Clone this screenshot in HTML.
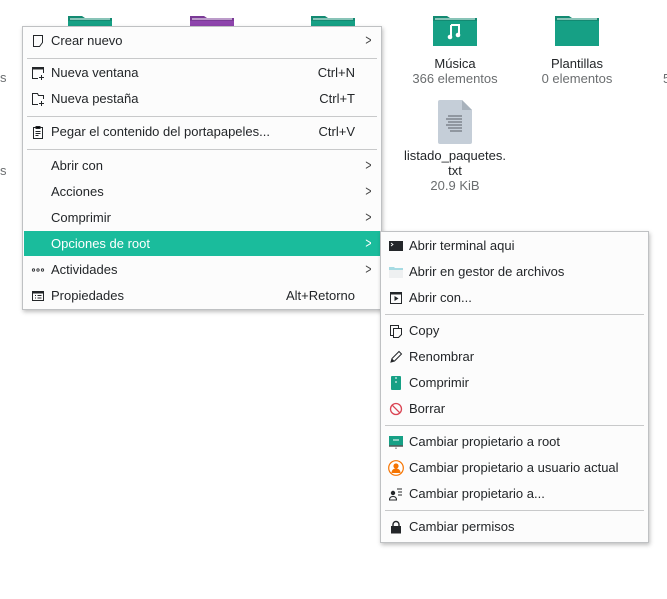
<!DOCTYPE html>
<html><head><meta charset="utf-8"><style>
*{margin:0;padding:0;box-sizing:border-box}
body{width:667px;height:599px;background:#fff;position:relative;overflow:hidden;font-family:"Liberation Sans",sans-serif;font-size:13px;color:#232629}
.a{position:absolute}
.menu{position:absolute;background:#fcfcfc;border:1px solid #bfc1c3;box-shadow:1px 2px 4px rgba(0,0,0,.25)}
.it{position:absolute;left:0;right:0;height:26px;line-height:26px}
.it .t{position:absolute;left:28px}
.it .s{position:absolute;right:26px}
.it .c{position:absolute;right:8px;font-size:15px;color:#444;transform:scaleX(.7)}
.sep{position:absolute;left:4px;right:4px;height:1px;background:#c8c9ca}
.ic{position:absolute;left:8px;top:6px;width:14px;height:14px}
.lbl{position:absolute;text-align:center;color:#232629}
.sub{color:#6b6e70}
</style></head><body>
<svg class="a" style="left:68px;top:14px" width="44" height="14"><path d="M0 2h14l3 2h27v10H0z" fill="#138a72"/><path d="M0 7h44v7H0z" fill="#16a085"/><path d="M2 5h40" stroke="#fff"/></svg>
<svg class="a" style="left:190px;top:14px" width="44" height="14"><path d="M0 2h14l3 2h27v10H0z" fill="#7a3a96"/><path d="M0 7h44v7H0z" fill="#8e44ad"/><path d="M2 5h40" stroke="#fff"/></svg>
<svg class="a" style="left:311px;top:14px" width="44" height="14"><path d="M0 2h14l3 2h27v10H0z" fill="#138a72"/><path d="M0 7h44v7H0z" fill="#16a085"/><path d="M2 5h40" stroke="#fff"/></svg>
<div class="a" style="left:0;top:70px;color:#6b6e70">s</div>
<div class="a" style="left:0;top:163px;color:#6b6e70">s</div>
<svg class="a" style="left:433px;top:14px" width="44" height="32"><path d="M0 2h14l3 2h27v28H0z" fill="#138a72"/><path d="M0 7h44v25H0z" fill="#16a085"/><path d="M2 5h40" stroke="#fff" stroke-width="1"/><path d="M18 11h8v10M18 11v12" stroke="#fff" stroke-width="2" fill="none"/><circle cx="17" cy="23" r="2.3" fill="#fff"/><circle cx="25" cy="21" r="2.3" fill="#fff"/></svg>
<svg class="a" style="left:555px;top:14px" width="44" height="32"><path d="M0 2h14l3 2h27v28H0z" fill="#138a72"/><path d="M0 7h44v25H0z" fill="#16a085"/><path d="M2 5h40" stroke="#fff" stroke-width="1"/></svg>
<div class="lbl" style="left:395px;top:56px;width:120px">Música<br><span class="sub">366 elementos</span></div>
<div class="lbl" style="left:517px;top:56px;width:120px">Plantillas<br><span class="sub">0 elementos</span></div>
<div class="a sub" style="left:663px;top:71px">5</div>
<svg class="a" style="left:438px;top:100px" width="34" height="44"><path d="M2 0h22l10 10v32a2 2 0 0 1-2 2H2a2 2 0 0 1-2-2V2a2 2 0 0 1 2-2z" fill="#c5ced8"/><path d="M24 0l10 10H24z" fill="#a8b2bc"/><path d="M10 16h14M8 19h16M10 22h14M8 25h16M10 28h14M12 31h12" stroke="#5a6068" stroke-width="1"/></svg>
<div class="lbl" style="left:395px;top:148px;width:120px;line-height:15px">listado_paquetes.<br>txt<br><span class="sub">20.9 KiB</span></div>

<div class="menu" style="left:22px;top:26px;width:360px;height:284px">
 <div class="it" style="top:1px"><svg class="ic" viewBox="0 0 14 14"><path d="M2.5 1.5h9v7l-3 4h-6z" fill="none" stroke="#232629"/></svg><span class="t">Crear nuevo</span><span class="c">&gt;</span></div>
 <div class="sep" style="top:31px"></div>
 <div class="it" style="top:33px"><svg class="ic" viewBox="0 0 14 14"><path d="M7 12.5H1.5v-11h11V7" fill="none" stroke="#232629"/><path d="M1.5 2.5h11" stroke="#232629" stroke-width="2"/><path d="M10.5 9v5M8 11.5h5" stroke="#232629"/></svg><span class="t">Nueva ventana</span><span class="s">Ctrl+N</span></div>
 <div class="it" style="top:59px"><svg class="ic" viewBox="0 0 14 14"><path d="M7 12.5H1.5v-11h5l1 2h5V7" fill="none" stroke="#232629"/><path d="M10.5 9v5M8 11.5h5" stroke="#232629"/></svg><span class="t">Nueva pestaña</span><span class="s">Ctrl+T</span></div>
 <div class="sep" style="top:89px"></div>
 <div class="it" style="top:92px"><svg class="ic" viewBox="0 0 14 14"><path d="M2.5 2.5h9v11h-9z" fill="none" stroke="#232629"/><path d="M5 1.5h4v2H5zM4.5 6.5h5M4.5 8.5h5M4.5 10.5h3" stroke="#232629"/></svg><span class="t">Pegar el contenido del portapapeles...</span><span class="s">Ctrl+V</span></div>
 <div class="sep" style="top:122px"></div>
 <div class="it" style="top:126px"><span class="t">Abrir con</span><span class="c">&gt;</span></div>
 <div class="it" style="top:152px"><span class="t">Acciones</span><span class="c">&gt;</span></div>
 <div class="it" style="top:178px"><span class="t">Comprimir</span><span class="c">&gt;</span></div>
 <div class="it" style="top:204px;left:1px;right:0;height:25px;line-height:25px;background:#1abc9c;color:#fff"><span class="t" style="left:27px">Opciones de root</span><span class="c" style="color:#fff">&gt;</span></div>
 <div class="it" style="top:230px"><svg class="ic" viewBox="0 0 14 14"><circle cx="2.5" cy="7" r="1.2" fill="none" stroke="#232629" stroke-width=".8"/><circle cx="7" cy="7" r="1.2" fill="none" stroke="#232629" stroke-width=".8"/><circle cx="11.5" cy="7" r="1.2" fill="none" stroke="#232629" stroke-width=".8"/></svg><span class="t">Actividades</span><span class="c">&gt;</span></div>
 <div class="it" style="top:256px"><svg class="ic" viewBox="0 0 14 14"><path d="M1.5 2.5h11v9h-11z" fill="none" stroke="#232629"/><path d="M1.5 3.5h11" stroke="#232629" stroke-width="2"/><path d="M4 6.5h1M4 9h1M6.5 6.5h4M6.5 9h4" stroke="#232629"/></svg><span class="t">Propiedades</span><span class="s">Alt+Retorno</span></div>
</div>

<div class="menu" style="left:380px;top:231px;width:269px;height:312px">
 <div class="it" style="top:1px"><svg class="ic" viewBox="0 0 14 14"><rect x="0" y="2" width="14" height="10" fill="#232629"/><path d="M2 4l2 1.5L2 7" stroke="#fff" stroke-width=".8" fill="none"/></svg><span class="t">Abrir terminal aqui</span></div>
 <div class="it" style="top:27px"><svg class="ic" viewBox="0 0 14 14"><path d="M0 2h5l1 1h8v10H0z" fill="#a6dbe3"/><path d="M0 5h14v8H0z" fill="#eef0f1"/></svg><span class="t">Abrir en gestor de archivos</span></div>
 <div class="it" style="top:53px"><svg class="ic" viewBox="0 0 14 14"><path d="M1.5 1.5h11v11h-11z" fill="none" stroke="#232629"/><path d="M1.5 2.5h11" stroke="#232629" stroke-width="2"/><path d="M5.5 5v5l4-2.5z" fill="#232629"/></svg><span class="t">Abrir con...</span></div>
 <div class="sep" style="top:82px"></div>
 <div class="it" style="top:86px"><svg class="ic" viewBox="0 0 14 14"><path d="M1.5 1.5h8v10h-8z" fill="none" stroke="#232629"/><path d="M4.5 4.5h8v6l-3 3h-5z" fill="#fcfcfc" stroke="#232629"/></svg><span class="t">Copy</span></div>
 <div class="it" style="top:112px"><svg class="ic" viewBox="0 0 14 14"><path d="M2 12l1-3.5 7-7 2.5 2.5-7 7z" fill="none" stroke="#232629"/><path d="M2 12l1-3.5 2.5 2.5z" fill="#232629"/></svg><span class="t">Renombrar</span></div>
 <div class="it" style="top:138px"><svg class="ic" viewBox="0 0 14 14"><rect x="2" y="0" width="10" height="14" rx="1" fill="#16a085"/><path d="M7 1v2M7 5v2" stroke="#fff"/></svg><span class="t">Comprimir</span></div>
 <div class="it" style="top:164px"><svg class="ic" viewBox="0 0 14 14"><circle cx="7" cy="7" r="5.5" fill="none" stroke="#da4453" stroke-width="1.3"/><path d="M3.2 3.2l7.6 7.6" stroke="#da4453" stroke-width="1.3"/></svg><span class="t">Borrar</span></div>
 <div class="sep" style="top:193px"></div>
 <div class="it" style="top:197px"><svg class="ic" viewBox="0 0 14 14"><rect x="0" y="1" width="14" height="10" fill="#16a085"/><path d="M0 11h14" stroke="#555" stroke-width="1.5"/><path d="M4 5h6" stroke="#fff"/><path d="M6 12.5h2v1.5H6z" fill="#aaa"/></svg><span class="t">Cambiar propietario a root</span></div>
 <div class="it" style="top:223px"><svg class="ic" style="left:7px;top:5px;width:16px;height:16px" viewBox="0 0 16 16"><circle cx="8" cy="8" r="7.3" fill="#fff" stroke="#f67400" stroke-width="1.2"/><circle cx="8" cy="6" r="2.6" fill="#f67400"/><path d="M3.5 13c0-3 2-4.5 4.5-4.5s4.5 1.5 4.5 4.5z" fill="#f67400"/></svg><span class="t">Cambiar propietario a usuario actual</span></div>
 <div class="it" style="top:249px"><svg class="ic" viewBox="0 0 14 14"><circle cx="4" cy="6" r="2.2" fill="#232629"/><path d="M0.5 13c0-2.5 1.5-3.5 3.5-3.5s3.5 1 3.5 3.5z" fill="none" stroke="#232629"/><path d="M8 2h5M9 5h4M9 8h4" stroke="#232629"/></svg><span class="t">Cambiar propietario a...</span></div>
 <div class="sep" style="top:278px"></div>
 <div class="it" style="top:282px"><svg class="ic" viewBox="0 0 14 14"><path d="M4 6V4.5a3 3 0 0 1 6 0V6" fill="none" stroke="#232629" stroke-width="1.4"/><rect x="2" y="6" width="10" height="7.5" fill="#232629"/></svg><span class="t">Cambiar permisos</span></div>
</div>
</body></html>
